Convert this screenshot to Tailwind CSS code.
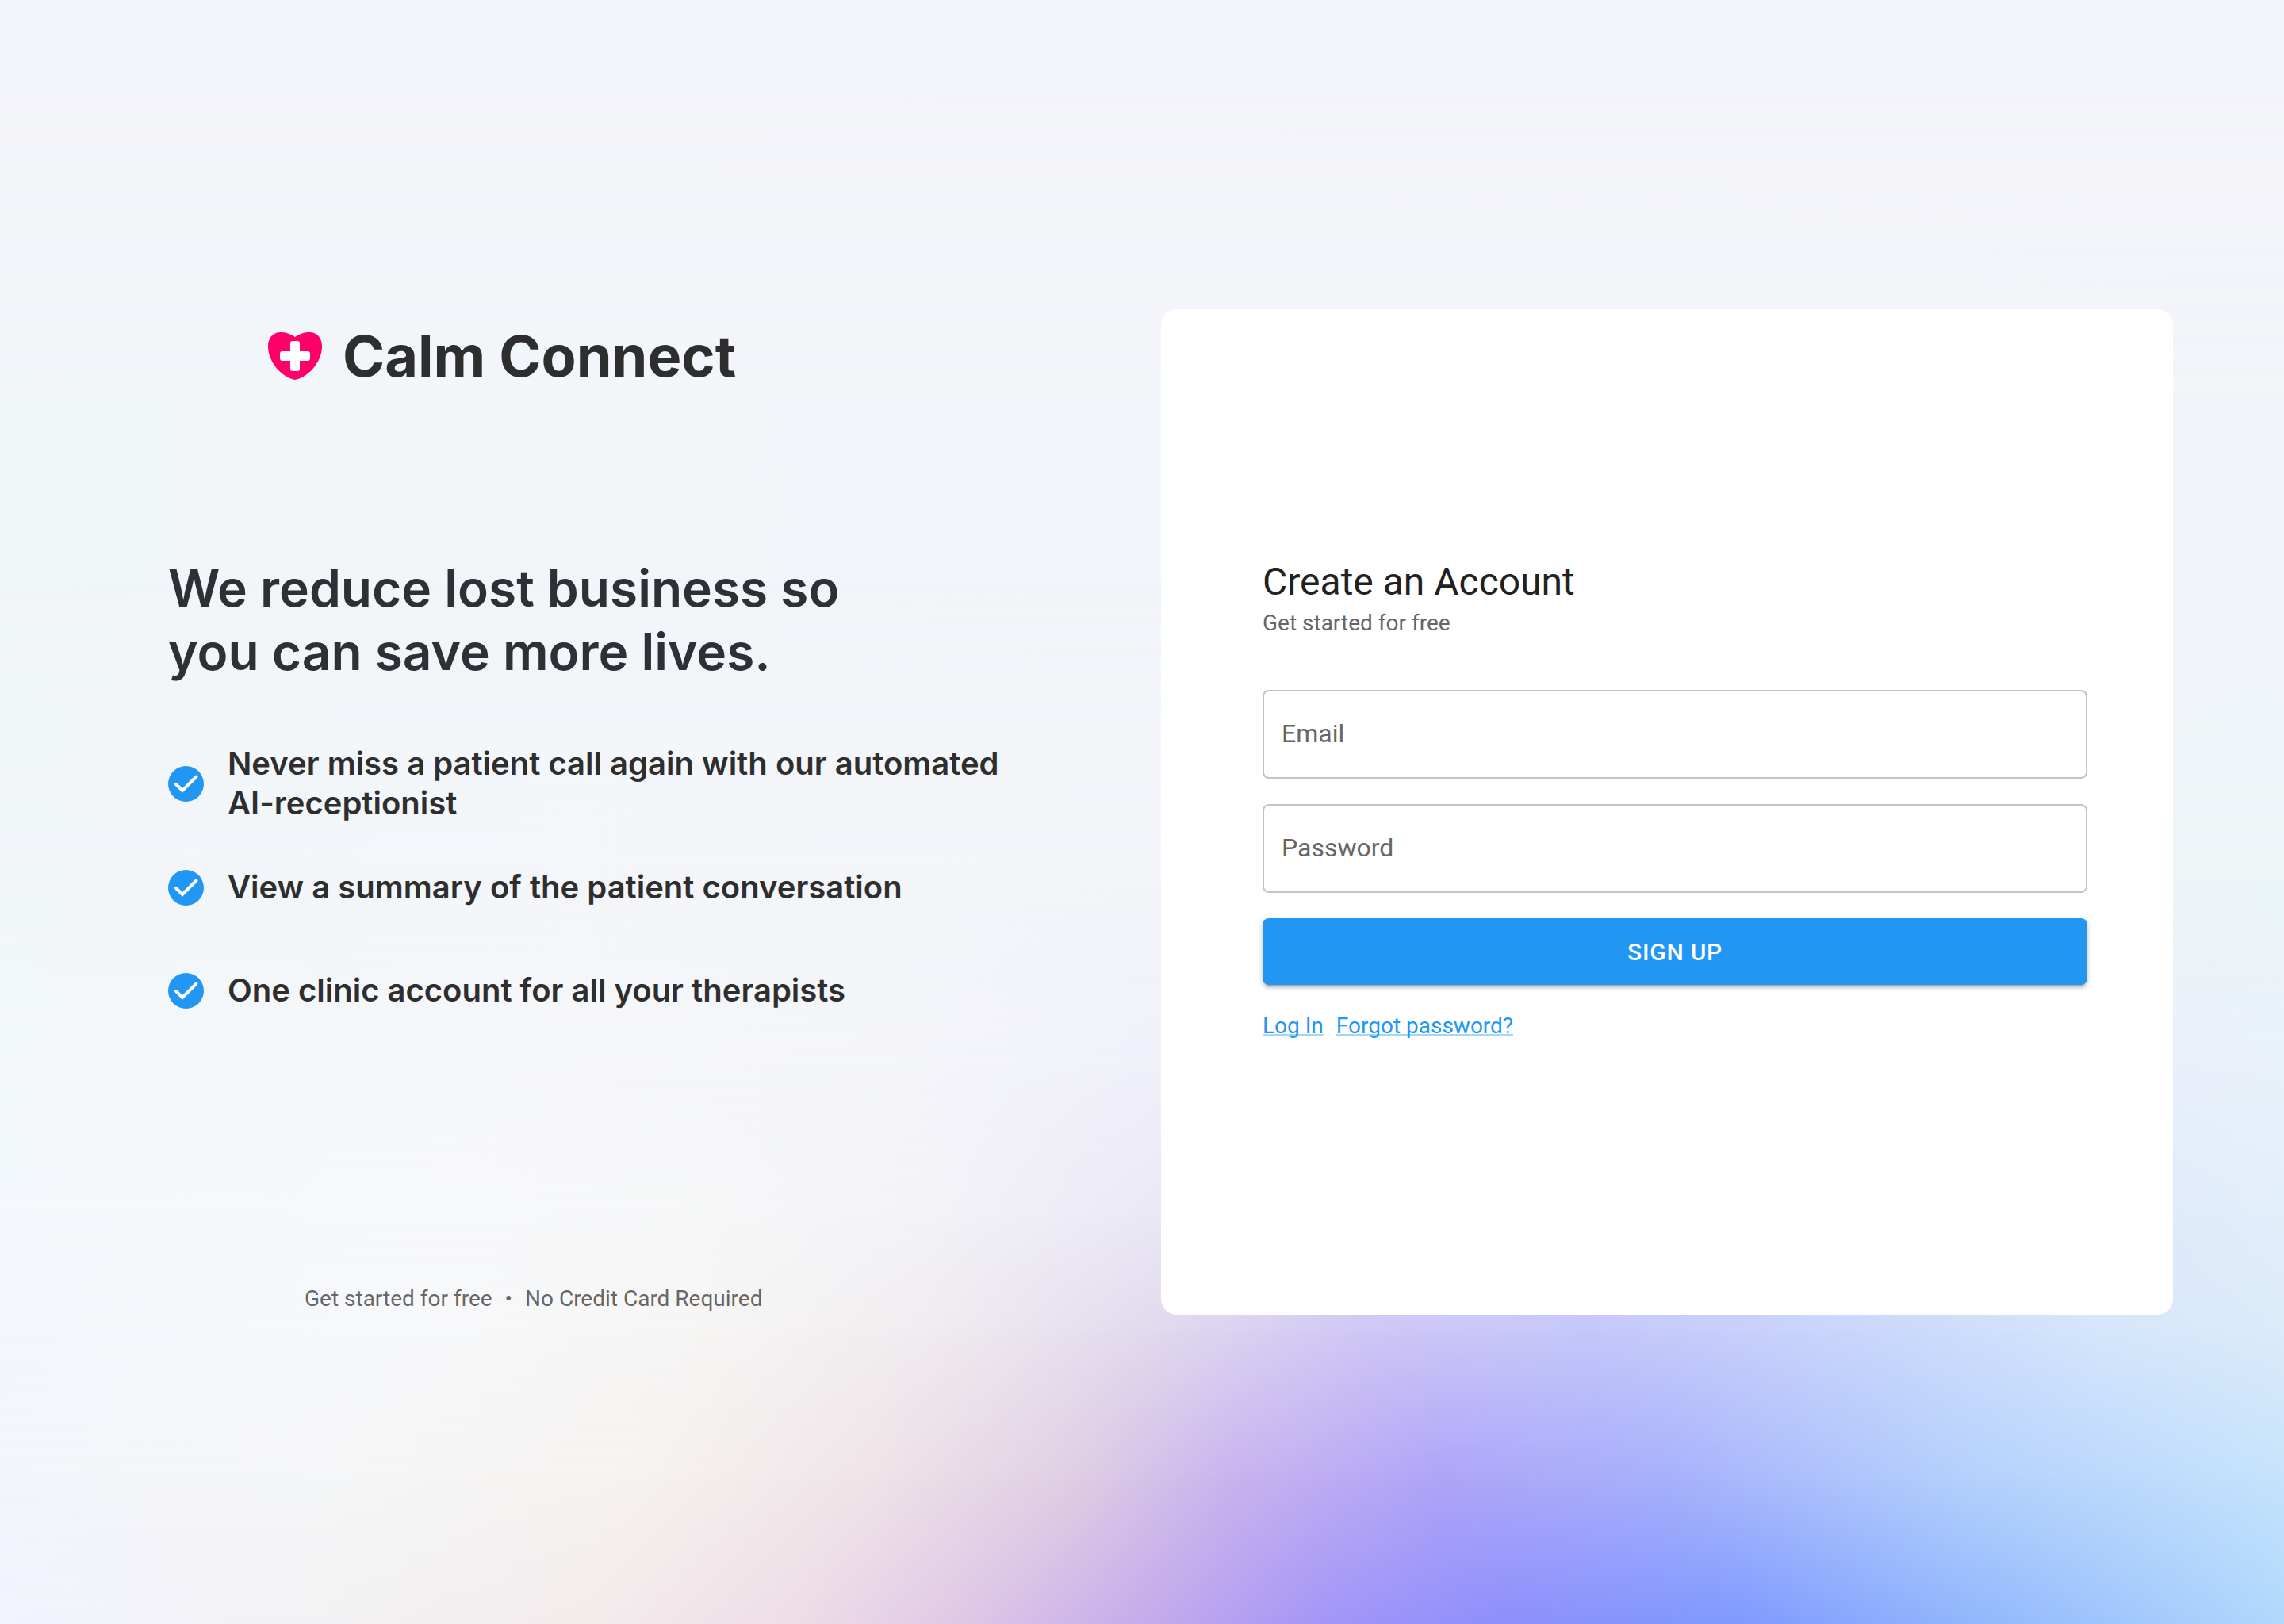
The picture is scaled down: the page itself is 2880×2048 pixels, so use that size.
<!doctype html>
<html lang="en">

<head>
  <meta charset="UTF-8" />
  <meta name="viewport" content="width=device-width, initial-scale=1.0" />
  <title>Calm Connect - Create an Account</title>
  <script src="https://cdn.jsdelivr.net/npm/@tailwindcss/browser@4"></script>
</head>

<body class="relative min-h-screen flex items-center bg-[#f3f5f9] font-['Roboto',sans-serif]">
  <!-- Background: horizontal colour bands, each one fading in over the one above -->
  <div class="absolute inset-0 -z-10 overflow-hidden" aria-hidden="true">
    <div class="absolute inset-0 bg-[#f4f5fa]"></div>
    <div class="absolute inset-0 bg-[linear-gradient(90deg,#f1f6f9,#f2f5f9_50%,#f2f4f9)] [mask-image:linear-gradient(transparent_5%,black_25%)]"></div>
    <div class="absolute inset-0 bg-[linear-gradient(90deg,#f1f6f9,#f4f6fa_25%,#f3f5f9_50%,#ecf5f7)] [mask-image:linear-gradient(transparent_35%,black_54%)]"></div>
    <div class="absolute inset-0 bg-[linear-gradient(90deg,#f3f8fb,#f6f7f9_25%,#f4f5fa_40%,#f0f0fa_50%,#e9e9fb_75%,#e9f1fa)] [mask-image:linear-gradient(transparent_54%,black_66%)]"></div>
    <div class="absolute inset-0 bg-[linear-gradient(90deg,#f3f8fc,#f7f8fa_20%,#f6f7f8_31%,#f3f3f7_40%,#ebe8f5_50%,#dad7f8_63%,#d8dffa_80%,#e2eefa)] [mask-image:linear-gradient(transparent_66%,black_75%)]"></div>
    <div class="absolute inset-0 bg-[linear-gradient(90deg,#f3f7fc,#f7f8fa_20%,#f6f5f4_31%,#f0ebef_41%,#e2daed_50%,#cfc6f5_60%,#c4c7fa_70%,#cad9fb_83%,#d5e6fb_92%,#dbebfa)] [mask-image:linear-gradient(transparent_75%,black_82%)]"></div>
    <div class="absolute inset-0 bg-[linear-gradient(90deg,#f3f5fb,#f5f6f7_15%,#f6f2ef_28%,#efe4e8_38%,#dfcee3_47%,#c8b3ee_54%,#afa4f8_63%,#a6b1fb_73%,#b4d0fc_86%,#c6e3fb)] [mask-image:linear-gradient(transparent_82%,black_91%)]"></div>
    <div class="absolute inset-0 bg-[linear-gradient(90deg,#f2f3fe,#f2f1f3_14%,#f3ebec_26%,#eddce6_35%,#dfc7e6_42%,#c5abea_50%,#a395f7_58%,#8c8ffb_66%,#7f99fe_76%,#92b8fc_87%,#b0d8fc)] [mask-image:linear-gradient(transparent_91%,black)]"></div>
  </div>

  <main class="w-full px-[140px] grid grid-cols-2 gap-12">
    <!-- Left side: pitch -->
    <section class="flex flex-col pl-[72px] pt-3.5 font-['Inter',sans-serif] text-[#2e2e2e]">
      <div class="flex items-center gap-[26px] pl-[126px]">
        <svg class="w-[68px] h-[60px]" viewBox="0 0 68 60" aria-hidden="true">
          <path fill="#ff0069" d="M34 6C41 1 47 0 52 0C63 0 68 8 68 18C68 38 50 57 34 60C18 57 0 38 0 18C0 8 5 0 16 0C21 0 27 1 34 6Z" />
          <rect x="28" y="11" width="12" height="38" rx="3" fill="#fff" />
          <rect x="15" y="24" width="38" height="12" rx="3" fill="#fff" />
        </svg>
        <p class="text-7xl leading-[90px] font-bold">Calm Connect</p>
      </div>

      <h1 class="mt-52 text-[64px] leading-20 font-semibold text-[#2d3135]">
        We reduce lost business so<br />you can save more lives.
      </h1>

      <ul class="mt-[76px] flex flex-col gap-8 text-[40px] leading-[50px] font-semibold">
        <li class="min-h-[98px] flex items-center gap-[30px]">
          <svg class="w-[45px] h-[45px] shrink-0" viewBox="0 0 45 45" aria-hidden="true">
            <circle cx="22.5" cy="22.5" r="22.5" fill="#2196f3" />
            <path d="M10 23L18 31L35.500 13.500" fill="none" stroke="#fff" stroke-width="4" stroke-linecap="round" />
          </svg>
          <span>Never miss a patient call again with our automated<br />AI-receptionist</span>
        </li>
        <li class="min-h-[98px] flex items-center gap-[30px]">
          <svg class="w-[45px] h-[45px] shrink-0" viewBox="0 0 45 45" aria-hidden="true">
            <circle cx="22.5" cy="22.5" r="22.5" fill="#2196f3" />
            <path d="M10 23L18 31L35.500 13.500" fill="none" stroke="#fff" stroke-width="4" stroke-linecap="round" />
          </svg>
          <span>View a summary of the patient conversation</span>
        </li>
        <li class="min-h-[98px] flex items-center gap-[30px]">
          <svg class="w-[45px] h-[45px] shrink-0" viewBox="0 0 45 45" aria-hidden="true">
            <circle cx="22.5" cy="22.5" r="22.5" fill="#2196f3" />
            <path d="M10 23L18 31L35.500 13.500" fill="none" stroke="#fff" stroke-width="4" stroke-linecap="round" />
          </svg>
          <span>One clinic account for all your therapists</span>
        </li>
      </ul>

      <p class="mt-auto pl-[172px] flex gap-4 font-['Roboto',sans-serif] text-[28px] leading-10 text-[#666666]">
        <span>Get started for free</span>
        <span>•</span>
        <span>No Credit Card Required</span>
      </p>
    </section>

    <!-- Right side: sign up card -->
    <section class="rounded-[20px] bg-white pl-32 pr-[108px] pt-[312px] pb-[344px]">
      <h2 class="text-5xl leading-16 text-[#212121]">Create an Account</h2>
      <p class="text-[28px] leading-10 text-[#666666]">Get started for free</p>

      <form class="mt-16 flex flex-col gap-8">
        <input type="email" aria-label="Email" placeholder="Email"
          class="w-full h-28 px-[22px] pb-0.5 border-2 border-[#c4c4c4] rounded-lg text-[32px] text-[#212121] placeholder:text-[#666666]" />
        <input type="password" aria-label="Password" placeholder="Password"
          class="w-full h-28 px-[22px] pb-0.5 border-2 border-[#c4c4c4] rounded-lg text-[32px] text-[#212121] placeholder:text-[#666666]" />
        <button type="submit"
          class="w-full h-[84px] rounded-lg bg-[#2196f3] text-white text-[30px] font-medium tracking-wide shadow-[0_6px_2px_-4px_rgba(0,0,0,0.2),0_4px_4px_0_rgba(0,0,0,0.14),0_2px_10px_0_rgba(0,0,0,0.12)]">
          SIGN UP
        </button>
      </form>

      <div class="mt-8 flex gap-4 text-[28px] leading-10 text-[#2196f3]">
        <a href="#" class="underline decoration-[#2196f3]/40 decoration-2 underline-offset-1 [text-decoration-skip-ink:none]">Log In</a>
        <a href="#" class="underline decoration-[#2196f3]/40 decoration-2 underline-offset-1 [text-decoration-skip-ink:none]">Forgot password?</a>
      </div>
    </section>
  </main>
</body>

</html>
